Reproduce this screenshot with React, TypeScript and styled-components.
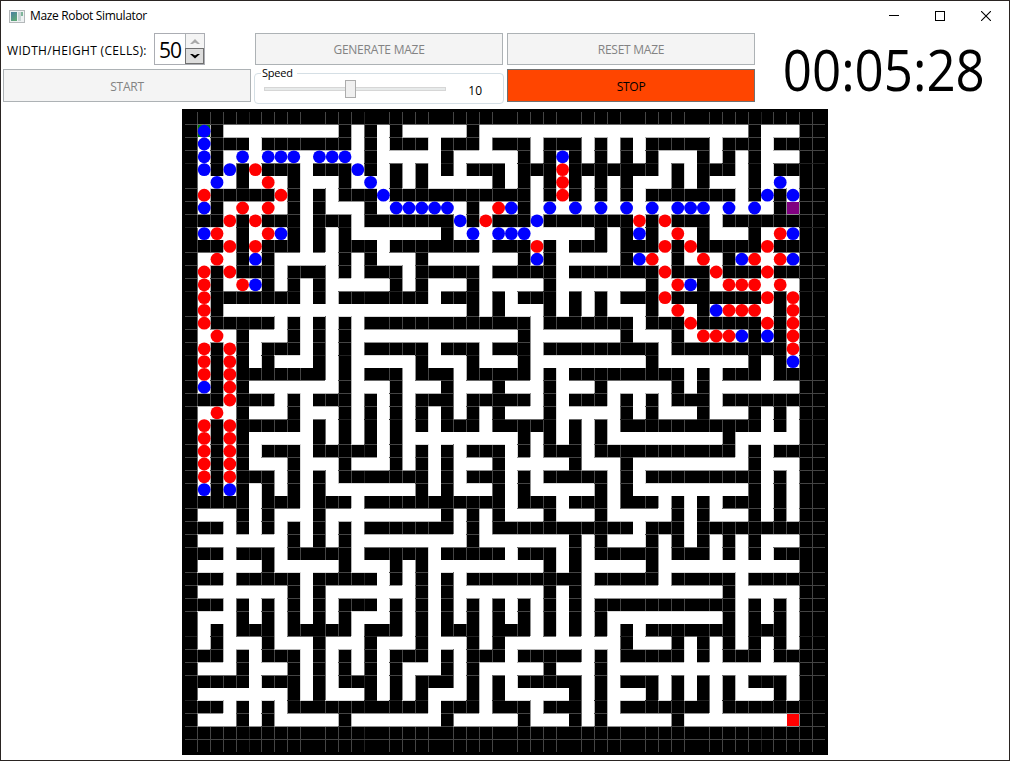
import React from "react";
import styled, { createGlobalStyle } from "styled-components";

const GlobalStyle = createGlobalStyle`
  * { box-sizing: border-box; }
  html, body { margin: 0; padding: 0; background: #fff; }
  body {
    font-family: "Open Sans", "Noto Sans", sans-serif;
    font-size: 12px;
    color: #000;
    overflow: hidden;
  }
`;

/* ---------- maze data ---------- */

const CELLS = 50;
const LAST = 47;
const PITCH = 12.8;

// Odd rows: even columns that are walled off. Even rows: odd columns that are open.
const ROWS: number[][] = [
  [2, 12, 14, 16, 22, 44],
  [1, 5, 13, 15, 19, 23, 27, 31, 33, 35, 41, 45],
  [2, 14, 20, 26, 28, 30, 32, 34, 36, 40, 42, 44],
  [1, 3, 5, 9, 13, 15, 17, 19, 21, 25, 29, 37, 39, 43, 45],
  [4, 8, 12, 16, 18, 24, 26, 28, 30, 32, 34, 38, 40, 44],
  [1, 7, 9, 11, 15, 27, 29, 31, 33, 35, 43, 45, 47],
  [2, 8, 10, 14, 22, 26, 46],
  [3, 5, 9, 13, 21, 23, 27, 35, 37, 41],
  [4, 8, 10, 12, 20, 32, 34, 36, 40, 44],
  [3, 5, 9, 11, 15, 23, 27, 29, 33, 37, 39, 45],
  [4, 6, 12, 14, 18, 26, 28, 34, 38, 42],
  [1, 3, 7, 11, 13, 17, 23, 29, 37, 41, 45],
  [2, 6, 8, 10, 16, 18, 22, 28, 36, 40],
  [1, 9, 11, 19, 23, 25, 29, 31, 33, 37, 45, 47],
  [2, 22, 24, 28, 30, 32, 36, 40, 46],
  [1, 7, 9, 11, 13, 27, 35, 39, 45, 47],
  [4, 8, 10, 12, 26, 34, 38, 44, 46],
  [1, 3, 5, 9, 11, 13, 19, 23, 27, 37, 47],
  [2, 4, 6, 10, 12, 18, 22, 26, 36, 44, 46],
  [1, 3, 11, 13, 17, 21, 27, 29, 39, 41, 45],
  [2, 4, 12, 16, 20, 24, 28, 32, 38, 40],
  [3, 7, 9, 13, 15, 17, 21, 27, 29, 33, 35, 37, 41],
  [4, 8, 12, 14, 16, 18, 20, 22, 24, 28, 34, 36, 40, 44, 46],
  [1, 3, 9, 11, 13, 15, 17, 19, 23, 29, 31, 33, 45, 47],
  [2, 4, 10, 12, 14, 16, 26, 28, 30, 32, 42],
  [1, 3, 5, 9, 15, 17, 19, 21, 25, 27, 31, 43, 45],
  [2, 4, 8, 12, 16, 18, 20, 24, 30, 34, 44],
  [1, 3, 7, 9, 11, 19, 21, 25, 27, 33, 35, 45, 47],
  [2, 4, 6, 8, 10, 18, 20, 24, 26, 32, 34, 44, 46],
  [5, 9, 13, 25, 29, 33, 37, 39, 41, 45, 47],
  [4, 6, 10, 20, 22, 24, 28, 32, 38, 40, 44, 46],
  [3, 5, 7, 9, 11, 13, 21, 23, 35, 39],
  [8, 10, 12, 22, 30, 32, 36, 38, 40, 42, 44],
  [3, 7, 13, 19, 25, 29, 31, 37, 41, 43, 45],
  [6, 12, 16, 18, 28, 30, 36],
  [3, 9, 15, 17, 19, 21, 31, 37, 43],
  [8, 10, 18, 20, 28, 30, 42],
  [3, 5, 7, 9, 11, 15, 17, 19, 21, 23, 25, 27, 29, 31, 43, 45, 47],
  [4, 6, 8, 10, 12, 16, 18, 20, 22, 24, 26, 28, 30, 32, 42, 44, 46],
  [1, 3, 7, 13, 17, 19, 23, 27, 29, 31, 33, 35, 43, 47],
  [2, 6, 10, 14, 18, 22, 24, 34, 38, 40, 42, 44, 46],
  [3, 5, 9, 11, 13, 15, 19, 21, 25, 31, 33, 39, 41, 45],
  [4, 8, 10, 12, 14, 16, 20, 22, 28, 32],
  [5, 9, 11, 15, 17, 21, 23, 25, 31, 33, 37, 39, 41, 43, 47],
  [8, 10, 14, 16, 18, 22, 24, 30, 32, 36, 38, 40, 42, 46],
  [3, 5, 7, 19, 23, 27, 31, 33, 41],
  [4, 6, 12, 20, 26, 30, 32, 38],
];

const VISITED: Record<number, number[]> = {
  1: [1], 2: [1],
  3: [1, 4, 6, 7, 8, 10, 11, 12, 29],
  4: [1, 3, 13],
  5: [2, 14, 46],
  6: [15, 45, 47],
  7: [1, 16, 17, 18, 19, 20, 25, 28, 30, 32, 34, 36, 38, 39, 40, 42, 44],
  8: [21, 27],
  9: [1, 7, 22, 24, 25, 26, 35, 47],
  11: [5, 27, 35, 43, 47],
  13: [5, 39],
  15: [41],
  17: [43, 45],
  19: [47],
  21: [1],
  29: [1, 3],
};

const BACKTRACKED: Record<number, number[]> = {
  4: [5, 29], 5: [6, 29], 6: [1, 7, 29], 7: [4, 6, 24],
  8: [3, 5, 23, 35, 37],
  9: [2, 6, 38, 46],
  10: [3, 5, 27, 37, 39, 45],
  11: [2, 36, 40, 44, 46],
  12: [1, 3, 37, 41, 45],
  13: [1, 4, 38, 42, 43, 44, 46],
  14: [1, 37, 45, 47],
  15: [1, 38, 42, 43, 44, 47],
  16: [1, 39, 45, 47],
  17: [2, 40, 41, 42, 47],
  18: [1, 3, 47], 19: [1, 3], 20: [1, 3], 21: [3], 22: [3], 23: [2],
  24: [1, 3], 25: [1, 3], 26: [1, 3], 27: [1, 3], 28: [1, 3],
};

const isOpen = (c: number, r: number): boolean => {
  if (c < 1 || r < 1 || c > LAST || r > LAST) return false;
  const listed = ROWS[r - 1].includes(c);
  if (r % 2 === 1) return c % 2 === 1 || !listed;
  return c % 2 === 1 && listed;
};

const edge = (i: number) => Math.floor(i * PITCH + 1e-6);
const hasLine = (i: number) => i % 5 !== 0;

const FAINT_ROWS = [4, 9, 14, 19, 24, 41, 46];
const FAINT_COLUMNS = [5, 14, 45];
const LINE = 0x44;
const FAINT_LINE = 0x20;

const gray = (v: number) => `rgb(${v},${v},${v})`;

// Colour of the one-pixel seam between two neighbouring cells; an open cell
// covers the part of the seam that lies on its side of the exact boundary.
const seam = (i: number, before: boolean, after: boolean, faint: boolean): string | null => {
  if (before && after) return null;
  if (!before && !after) {
    if (faint) return gray(FAINT_LINE);
    return hasLine(i) ? gray(LINE) : null;
  }
  if (!hasLine(i)) return null;
  const f = i * PITCH - edge(i);
  const cover = before ? f : 1 - f;
  return gray(Math.round(LINE + (255 - LINE) * cover));
};

/* ---------- maze drawing ---------- */

const MazeFrame = styled.svg`
  display: block;
  width: 646px;
  height: 646px;
  background: #000;
`;

function Dots({ map, fill }: { map: Record<number, number[]>; fill: string }) {
  return (
    <g fill={fill}>
      {Object.entries(map).flatMap(([r, cols]) =>
        cols.map((c) => (
          <circle key={`${r}-${c}`} cx={(c + 0.5) * PITCH} cy={(Number(r) + 0.5) * PITCH} r={6.4} />
        ))
      )}
    </g>
  );
}

function Block({ c, r, fill, inset = 0 }: { c: number; r: number; fill: string; inset?: number }) {
  const x = edge(c) + inset;
  const y = edge(r) + inset;
  return <rect x={x} y={y} width={edge(c + 1) - x} height={edge(r + 1) - y} fill={fill} />;
}

function Maze() {
  const open: React.ReactNode[] = [];
  const lines: React.ReactNode[] = [];
  for (let r = 0; r < CELLS; r++) {
    for (let c = 0; c < CELLS; c++) {
      if (isOpen(c, r)) open.push(<Block key={`${c}-${r}`} c={c} r={r} fill="#fff" />);
      const w = edge(c + 1) - edge(c);
      const h = edge(r + 1) - edge(r);
      if (c > 0) {
        const s = seam(c, isOpen(c - 1, r), isOpen(c, r), FAINT_COLUMNS.includes(c));
        if (s) lines.push(<rect key={`v${c}-${r}`} x={edge(c)} y={edge(r)} width={1} height={h} fill={s} />);
      }
      if (r > 0) {
        const s = seam(r, isOpen(c, r - 1), isOpen(c, r), FAINT_ROWS.includes(r));
        if (s) lines.push(<rect key={`h${c}-${r}`} x={edge(c)} y={edge(r)} width={w} height={1} fill={s} />);
      }
    }
  }
  return (
    <MazeFrame viewBox="-3 -3 646 646">
      <g shapeRendering="crispEdges">
        {open}
        {lines}
        <Block c={1} r={1} fill="#008000" inset={1} />
        <Block c={47} r={7} fill="#800080" inset={1} />
        <Block c={47} r={47} fill="#ff0000" inset={1} />
      </g>
      <Dots map={VISITED} fill="#0000ff" />
      <Dots map={BACKTRACKED} fill="#ff0000" />
    </MazeFrame>
  );
}

/* ---------- window chrome ---------- */

const Window = styled.div`
  width: 1010px;
  height: 761px;
  display: flex;
  flex-direction: column;
  background: #fff;
  border: 1px solid #2a2422;
`;

const TitleBar = styled.header`
  height: 30px;
  flex: none;
  display: flex;
  align-items: center;
  padding-left: 8px;
`;

const Title = styled.span`
  flex: 1;
  margin-left: 5px;
  line-height: 16px;
  letter-spacing: -0.34px;
`;

const CaptionButton = styled.button`
  width: 46px;
  height: 30px;
  padding: 0;
  border: 0;
  background: none;
  display: grid;
  place-items: center;
`;

const Toolbar = styled.div`
  height: 78px;
  flex: none;
  display: grid;
  grid-template-columns: 248px 248px 248px 1fr;
  grid-template-rows: 32px 33px;
  column-gap: 4px;
  row-gap: 4px;
  padding: 2px 0 0 2px;
`;

const PushButton = styled.button<{ $stop?: boolean }>`
  border: 1px solid ${(p) => (p.$stop ? "#707070" : "#adb2b5")};
  background: ${(p) => (p.$stop ? "#ff4500" : "#f4f4f4")};
  color: ${(p) => (p.$stop ? "#000" : "#838383")};
  font: inherit;
  letter-spacing: -0.25px;
  padding: 1px 0 0;
`;

const SizeField = styled.label`
  display: flex;
  align-items: center;
  padding-left: 4px;
  letter-spacing: 0.34px;
  white-space: nowrap;
`;

const FieldText = styled.span`
  width: 140px;
  padding-top: 2px;
`;

const Spinner = styled.span`
  display: flex;
  width: 51px;
  height: 32px;
  margin-left: 7px;
  border: 1px solid #abadb3;
`;

const SpinnerValue = styled.span`
  flex: 1;
  text-align: center;
  font-size: 21px;
  line-height: 33px;
  letter-spacing: -1px;
`;

const SpinnerButtons = styled.span`
  width: 19px;
  display: flex;
  flex-direction: column;
`;

const Step = styled.span<{ $active?: boolean }>`
  flex: 1;
  display: grid;
  place-items: center;
  border: 1px solid ${(p) => (p.$active ? "#707070" : "#adb2b5")};
  border-width: ${(p) => (p.$active ? "1px" : "0 0 0 1px")};
  background: ${(p) => (p.$active ? "#dddddd" : "#f4f4f4")};
`;

const SpeedGroup = styled.fieldset`
  min-width: 0;
  height: 38px;
  margin: -3px -1px 0;
  padding: 0 21px 0 9px;
  border: 1px solid #d5dfe5;
  border-radius: 4px;
  display: flex;
  align-items: flex-start;
  justify-content: space-between;
`;

const SpeedLegend = styled.legend`
  margin-left: -3px;
  padding: 0 4px 0 1px;
  font-size: 11px;
  line-height: 14px;
  letter-spacing: -0.2px;
`;

const Slider = styled.span`
  display: block;
  width: 182px;
  height: 18px;
  padding-top: 7px;
`;

const Track = styled.span`
  display: block;
  height: 4px;
  background: #e7eaea;
  border: 1px solid #d6d6d6;
`;

const Thumb = styled.span`
  display: block;
  width: 11px;
  height: 18px;
  margin: -11px 0 0 81px;
  position: relative;
  background: #f0f0f0;
  border: 1px solid #acacac;
`;

const SpeedValue = styled.span`
  line-height: 22px;
`;

const Clock = styled.div`
  grid-column: 4;
  grid-row: 1 / 3;
  display: flex;
  align-items: center;
  justify-content: center;
  font-size: 56px;
  line-height: 70px;
  padding: 2px 0 0;
`;

const ClockDigits = styled.span`
  transform: scaleX(0.912);
`;

const Stage = styled.main`
  display: flex;
  justify-content: center;
`;

export default function App() {
  return (
    <>
      <GlobalStyle />
      <Window>
        <TitleBar>
          <svg width="16" height="13" viewBox="0 0 16 13">
            <rect x="0.5" y="0.5" width="15" height="12" fill="#eef1f2" stroke="#b4b8ba" />
            <defs>
              <linearGradient id="pane" x1="0" y1="0" x2="0.6" y2="1">
                <stop offset="0" stopColor="#4a7fa0" />
                <stop offset="1" stopColor="#5fa878" />
              </linearGradient>
            </defs>
            <rect x="2" y="2" width="6" height="9" fill="url(#pane)" />
            <rect x="9" y="2" width="3" height="9" fill="#c8d4d4" />
            <rect x="12" y="2" width="2" height="4" fill="#7fb59a" />
          </svg>
          <Title>Maze Robot Simulator</Title>
          <CaptionButton aria-label="Minimize">
            <svg width="10" height="10"><rect y="4" width="10" height="1" /></svg>
          </CaptionButton>
          <CaptionButton aria-label="Maximize">
            <svg width="10" height="10"><rect x="0.5" y="0.5" width="9" height="9" fill="none" stroke="#000" /></svg>
          </CaptionButton>
          <CaptionButton aria-label="Close">
            <svg width="10" height="10"><path d="M0 0L10 10M10 0L0 10" stroke="#000" strokeWidth="1.1" /></svg>
          </CaptionButton>
        </TitleBar>
        <Toolbar>
          <SizeField>
            <FieldText>WIDTH/HEIGHT (CELLS):</FieldText>
            <Spinner>
              <SpinnerValue>50</SpinnerValue>
              <SpinnerButtons>
                <Step>
                  <svg width="10" height="5"><path d="M0 5L5 0L10 5L7.5 5L5 3.6L2.5 5Z" fill="#a8a8a8" /></svg>
                </Step>
                <Step $active>
                  <svg width="10" height="5"><path d="M0 0L2.5 0L5 1.6L7.5 0L10 0L5 4.6Z" fill="#000" /></svg>
                </Step>
              </SpinnerButtons>
            </Spinner>
          </SizeField>
          <PushButton>GENERATE MAZE</PushButton>
          <PushButton>RESET MAZE</PushButton>
          <Clock>
            <ClockDigits>00:05:28</ClockDigits>
          </Clock>
          <PushButton>START</PushButton>
          <SpeedGroup>
            <SpeedLegend>Speed</SpeedLegend>
            <Slider>
              <Track />
              <Thumb />
            </Slider>
            <SpeedValue>10</SpeedValue>
          </SpeedGroup>
          <PushButton $stop>STOP</PushButton>
        </Toolbar>
        <Stage>
          <Maze />
        </Stage>
      </Window>
    </>
  );
}
